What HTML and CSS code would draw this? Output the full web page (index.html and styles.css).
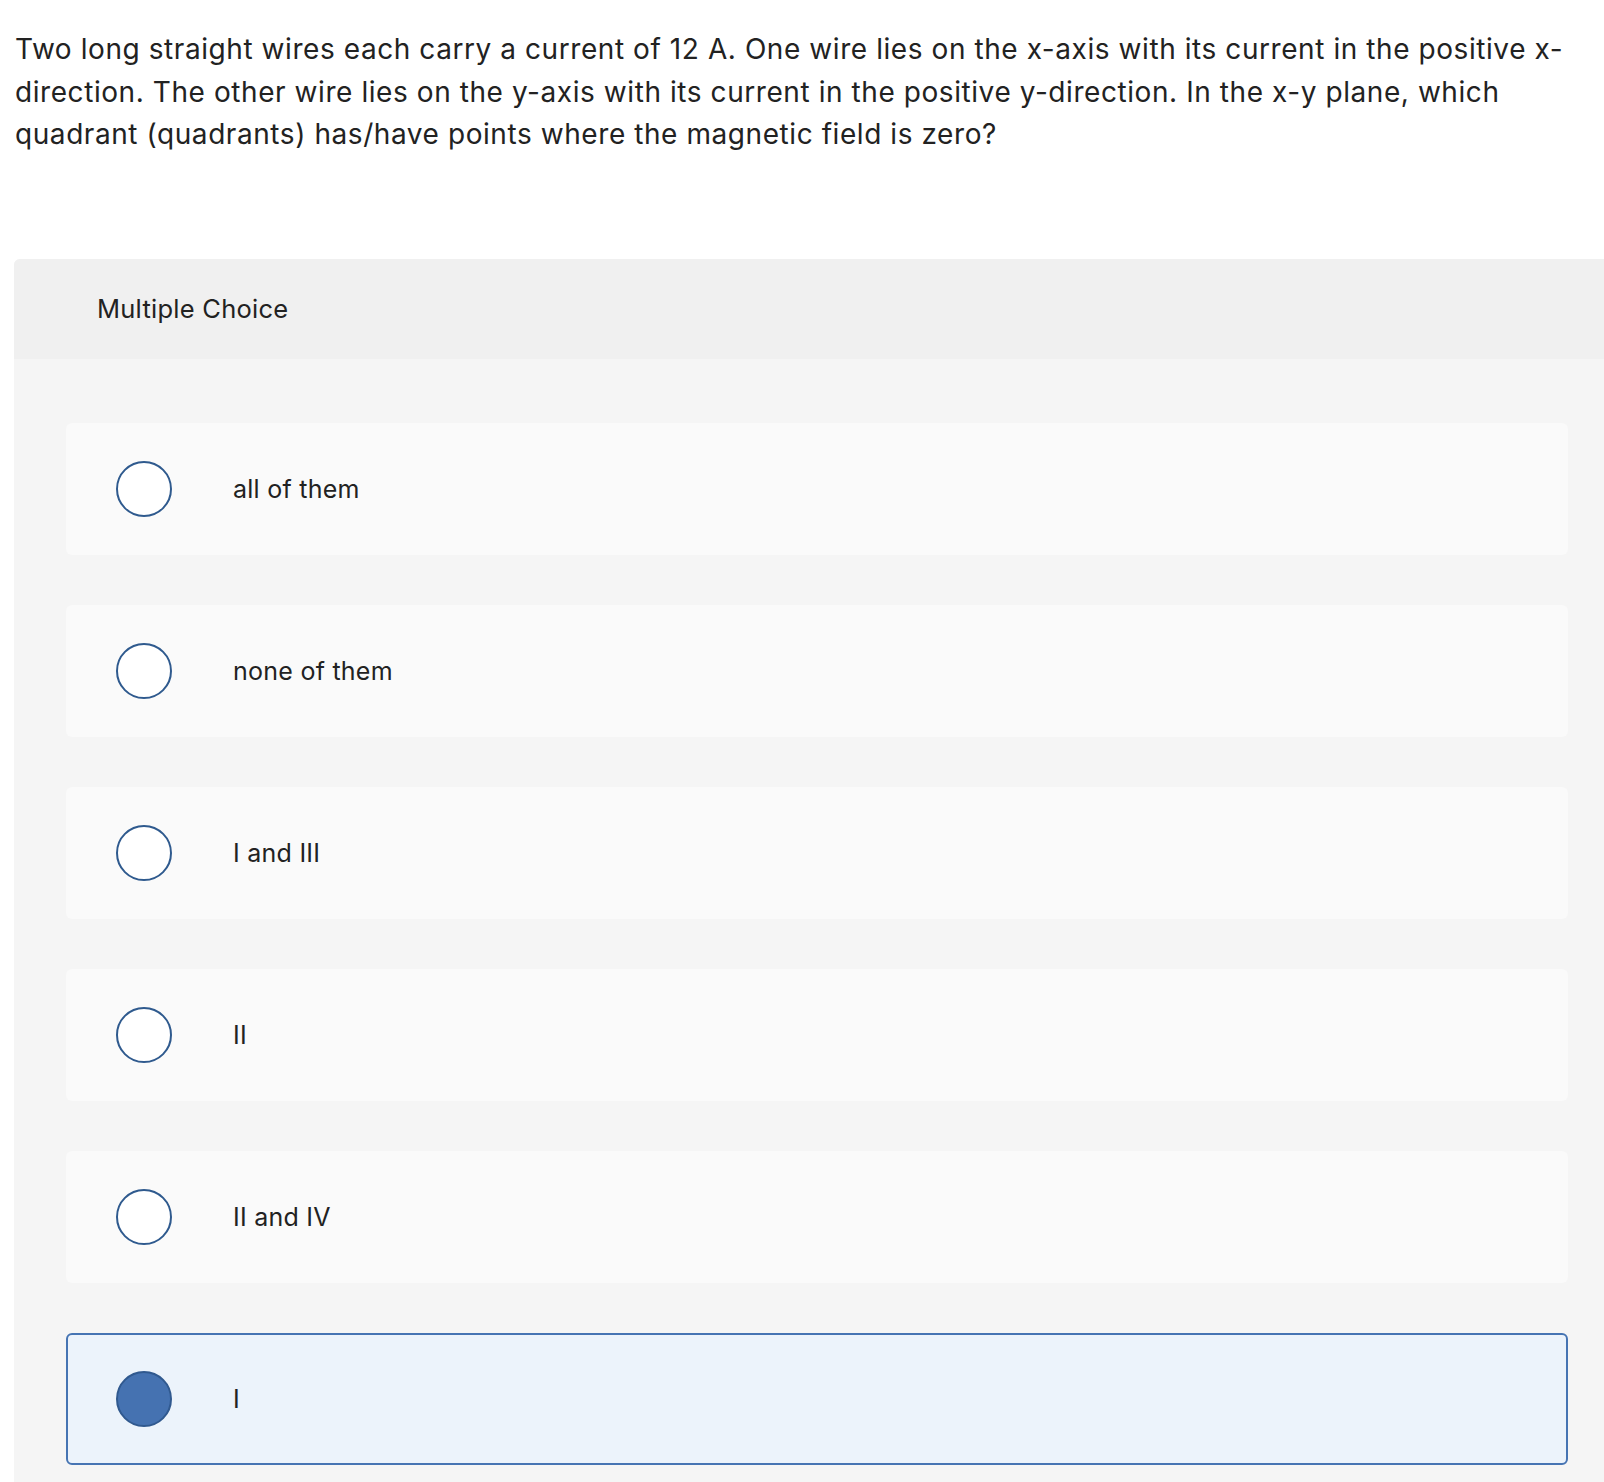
FILE: index.html
```html
<!DOCTYPE html>
<html lang="en">
<head>
<meta charset="utf-8">
<title>Multiple Choice</title>
<link rel="stylesheet" href="styles.css">
</head>
<body>
<div class="page">
  <p class="question">Two long straight wires each carry a current of 12 A. One wire lies on the x-axis with its current in the positive x-direction. The other wire lies on the y-axis with its current in the positive y-direction. In the x-y plane, which quadrant (quadrants) has/have points where the magnetic field is zero?</p>
  <div class="card">
    <div class="card-header">Multiple Choice</div>
    <div class="card-body">
      <div class="option"><span class="radio"></span><span class="label">all of them</span></div>
      <div class="option"><span class="radio"></span><span class="label">none of them</span></div>
      <div class="option"><span class="radio"></span><span class="label">I and III</span></div>
      <div class="option"><span class="radio"></span><span class="label">II</span></div>
      <div class="option"><span class="radio"></span><span class="label">II and IV</span></div>
      <div class="option selected"><span class="radio"></span><span class="label">I</span></div>
    </div>
  </div>
</div>
</body>
</html>
```

FILE: styles.css
```css
html, body { margin: 0; padding: 0; background: #ffffff; overflow: hidden; }
.page { width: 1604px; overflow: hidden; font-family: "Inter", "Lato", "Liberation Sans", sans-serif; color: #222222; }
.question { margin: 0; padding: 28px 20px 0 15px; font-size: 28px; line-height: 42.5px; letter-spacing: 0.57px; }
.card { width: 1606px; margin: 103px 0 0 14px; border-radius: 6px 0 0 0; overflow: hidden; background: #f5f5f5; }
.card-header { height: 100px; display: flex; align-items: center; padding-left: 83px; background: #f0f0f0; font-size: 25.5px; letter-spacing: 0.25px; }
.card-body { padding: 64px 52px 40px 52px; display: flex; flex-direction: column; gap: 50px; }
.option { height: 132px; box-sizing: border-box; display: flex; align-items: center; padding-left: 50px; background: #fafafa; border-radius: 6px; font-size: 25px; letter-spacing: 0.25px; }
.radio { width: 56px; height: 56px; box-sizing: border-box; border: 2px solid #2f5a8e; border-radius: 50%; background: #ffffff; flex: none; }
.label { margin-left: 61px; }
.option.selected { background: #ecf3fb; border: 2px solid #4674b3; padding-left: 48px; }
.option.selected .radio { background: #4572b1; border-color: #30598f; }
```
